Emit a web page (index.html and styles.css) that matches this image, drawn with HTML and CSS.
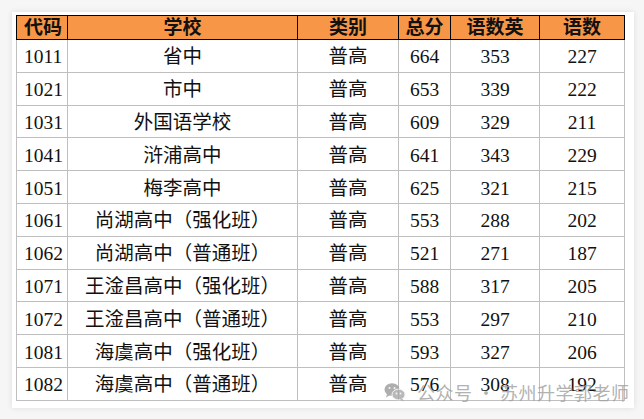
FILE: index.html
```html
<!DOCTYPE html>
<html lang="zh">
<head>
<meta charset="utf-8">
<link rel="stylesheet" href="styles.css">
</head>
<body>
<div class="card">
  <table class="scores">
    <colgroup>
      <col class="c-code"><col class="c-school"><col class="c-type"><col class="c-total"><col class="c-three"><col class="c-two">
    </colgroup>
    <thead>
      <tr><th class="left">代码</th><th>学校</th><th>类别</th><th>总分</th><th>语数英</th><th>语数</th></tr>
    </thead>
    <tbody>
      <tr><td class="left">1011</td><td>省中</td><td>普高</td><td>664</td><td>353</td><td>227</td></tr>
      <tr><td class="left">1021</td><td>市中</td><td>普高</td><td>653</td><td>339</td><td>222</td></tr>
      <tr><td class="left">1031</td><td>外国语学校</td><td>普高</td><td>609</td><td>329</td><td>211</td></tr>
      <tr><td class="left">1041</td><td>浒浦高中</td><td>普高</td><td>641</td><td>343</td><td>229</td></tr>
      <tr><td class="left">1051</td><td>梅李高中</td><td>普高</td><td>625</td><td>321</td><td>215</td></tr>
      <tr><td class="left">1061</td><td>尚湖高中（强化班）</td><td>普高</td><td>553</td><td>288</td><td>202</td></tr>
      <tr><td class="left">1062</td><td>尚湖高中（普通班）</td><td>普高</td><td>521</td><td>271</td><td>187</td></tr>
      <tr><td class="left">1071</td><td>王淦昌高中（强化班）</td><td>普高</td><td>588</td><td>317</td><td>205</td></tr>
      <tr><td class="left">1072</td><td>王淦昌高中（普通班）</td><td>普高</td><td>553</td><td>297</td><td>210</td></tr>
      <tr><td class="left">1081</td><td>海虞高中（强化班）</td><td>普高</td><td>593</td><td>327</td><td>206</td></tr>
      <tr><td class="left">1082</td><td>海虞高中（普通班）</td><td>普高</td><td>576</td><td>308</td><td>192</td></tr>
    </tbody>
  </table>
  <div class="watermark">
    <svg class="wx" width="22" height="20" viewBox="0 0 22 20">
      <ellipse cx="8" cy="7.5" rx="7.5" ry="6.3" fill="#9a9a9a"/>
      <path d="M3 12 L2 15.5 L6 13 Z" fill="#9a9a9a"/>
      <ellipse cx="14.5" cy="12.5" rx="6.5" ry="5.4" fill="#a8a8a8" stroke="#f3f3f3" stroke-width="1"/>
      <path d="M18.5 16.5 L19.5 19.5 L16 17.5 Z" fill="#a8a8a8"/>
      <circle cx="5.5" cy="6" r="1" fill="#f3f3f3"/>
      <circle cx="10.5" cy="6" r="1" fill="#f3f3f3"/>
      <circle cx="12.5" cy="11.5" r="0.9" fill="#f3f3f3"/>
      <circle cx="16.5" cy="11.5" r="0.9" fill="#f3f3f3"/>
    </svg>
    <span class="wm-text">公众号 · 苏州升学郭老师</span>
  </div>
</div>
</body>
</html>
```
FILE: styles.css
```css
html, body {
  margin: 0;
  padding: 0;
  background: #f6f6f6;
}
body {
  width: 644px;
  height: 419px;
  overflow: hidden;
}
.card {
  position: relative;
  margin: 12px 0 0 12px;
  width: 608px;
  padding: 3px 10px 7px 4px;
  background: #ffffff;
  box-shadow: 0 0 6px rgba(0, 0, 0, 0.10);
}
.scores {
  border-collapse: collapse;
  table-layout: fixed;
  width: 608px;
  font-family: "Liberation Serif", "Noto Sans CJK SC", serif;
  font-size: 19.5px;
  color: #111;
}
.c-code { width: 51px; }
.c-school { width: 230px; }
.c-type { width: 101px; }
.c-total { width: 52px; }
.c-three { width: 89px; }
.c-two { width: 85px; }
.scores th {
  background: #f79646;
  border: 1px solid #000;
  font-weight: bold;
  height: 23px;
  padding: 0;
  line-height: 22px;
  font-size: 19px;
  text-align: center;
}
.scores td {
  border: 1px solid #bfbfbf;
  height: 28.8px;
  padding: 3px 0 0 0;
  line-height: 22px;
  text-align: center;
  white-space: nowrap;
}
.scores .left {
  text-align: left;
  padding-left: 7px;
}
.watermark {
  position: absolute;
  left: 372px;
  top: 367px;
  display: flex;
  align-items: center;
  gap: 11px;
  opacity: 0.8;
}
.wm-text {
  font-family: "Noto Sans CJK SC", sans-serif;
  font-size: 18px;
  color: #a0a0a0;
  letter-spacing: 0.5px;
}
```
